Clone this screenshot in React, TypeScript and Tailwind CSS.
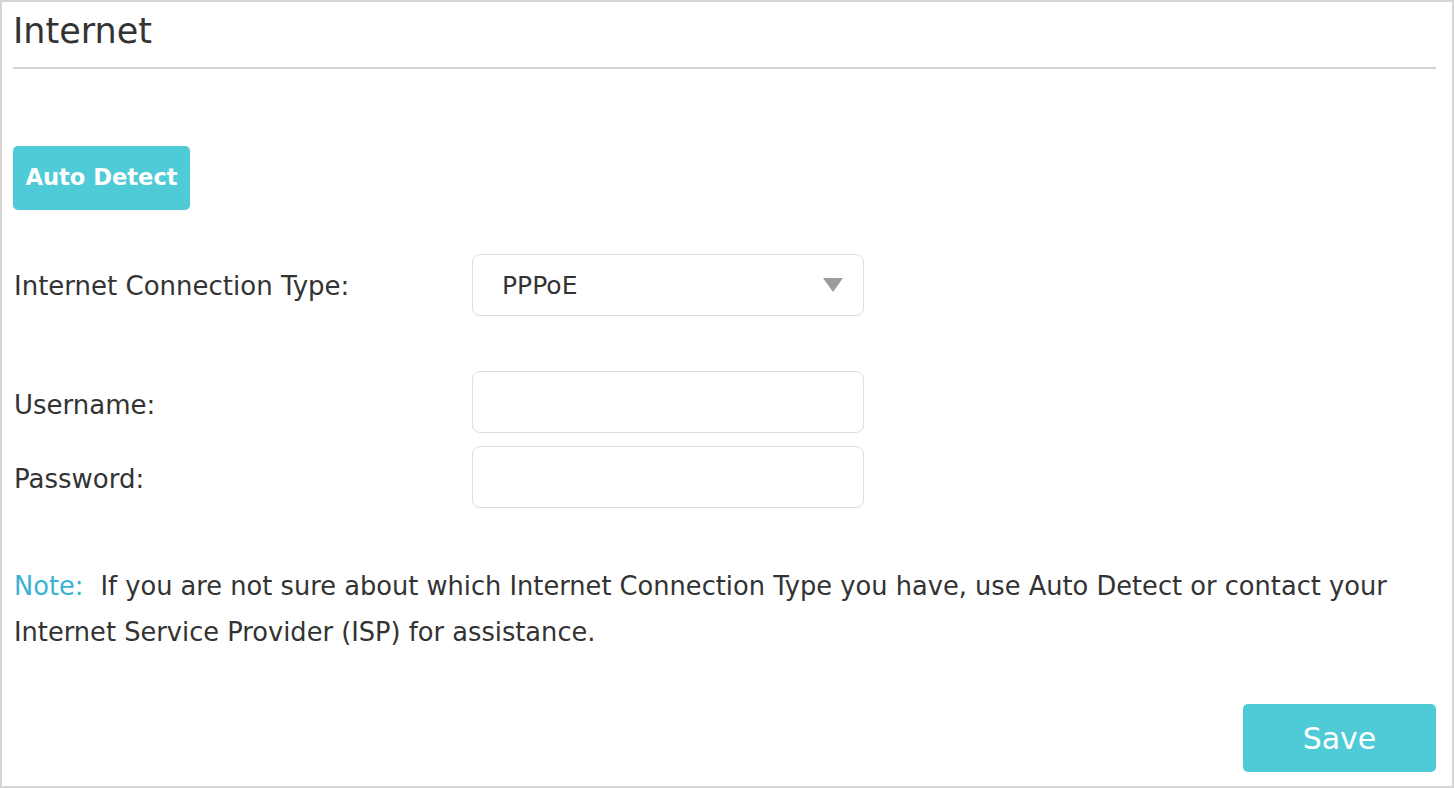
export default function App() {
  const font = { fontFamily: '"DejaVu Sans", Verdana, sans-serif' };

  return (
    <div
      className="w-[1454px] h-[788px] bg-white border-2 border-[#d6d6d6] pl-[11px] pr-[16px] text-[#333333] flex flex-col"
      style={font}
    >
      {/* Title */}
      <h1 className="pt-[9px] text-[35px] leading-[40px] font-normal text-[#333333]">Internet</h1>
      <div className="mt-[16px] h-[2px] bg-[#d4d4d4]"></div>

      {/* Auto detect */}
      <div className="mt-[77px]">
        <button className="w-[177px] h-[64px] rounded-[5px] bg-[#4ecbd6] text-white text-[22.6px] font-bold">
          Auto Detect
        </button>
      </div>

      {/* Connection type */}
      <div className="mt-[44px] flex items-center">
        <label className="w-[459px] pl-[1px] pt-[3px] text-[26px]">Internet Connection Type:</label>
        <div className="w-[392px] h-[62px] border border-[#dedede] rounded-[8px] flex items-center justify-between pl-[29px] pr-[20px]">
          <span className="text-[25px] pt-[2px]">PPPoE</span>
          <svg width="20" height="14" viewBox="0 0 20 14">
            <path d="M0 0 H20 L10 14 Z" fill="#9b9b9b" />
          </svg>
        </div>
      </div>

      {/* Credentials */}
      <div className="mt-[55px] flex flex-col gap-[13px]">
        <div className="flex items-center">
          <label className="w-[459px] pl-[1px] pt-[6px] text-[26px]">Username:</label>
          <input className="w-[392px] h-[62px] border border-[#dedede] rounded-[8px] outline-none" />
        </div>
        <div className="flex items-center">
          <label className="w-[459px] pl-[1px] pt-[5px] text-[26px]">Password:</label>
          <input type="password" className="w-[392px] h-[62px] border border-[#dedede] rounded-[8px] outline-none" />
        </div>
      </div>

      {/* Note */}
      <p className="mt-[55px] pl-[1px] text-[25.7px] leading-[46px]">
        <span className="text-[#3ab2d6] mr-[17px]">Note:</span>If you are not sure about which Internet Connection Type you have, use Auto Detect or contact your Internet Service Provider (ISP) for assistance.
      </p>

      {/* Save */}
      <div className="mt-[49px] flex justify-end">
        <button className="w-[193px] h-[68px] rounded-[5px] bg-[#4ecbd6] text-white text-[30px]">Save</button>
      </div>
    </div>
  );
}
